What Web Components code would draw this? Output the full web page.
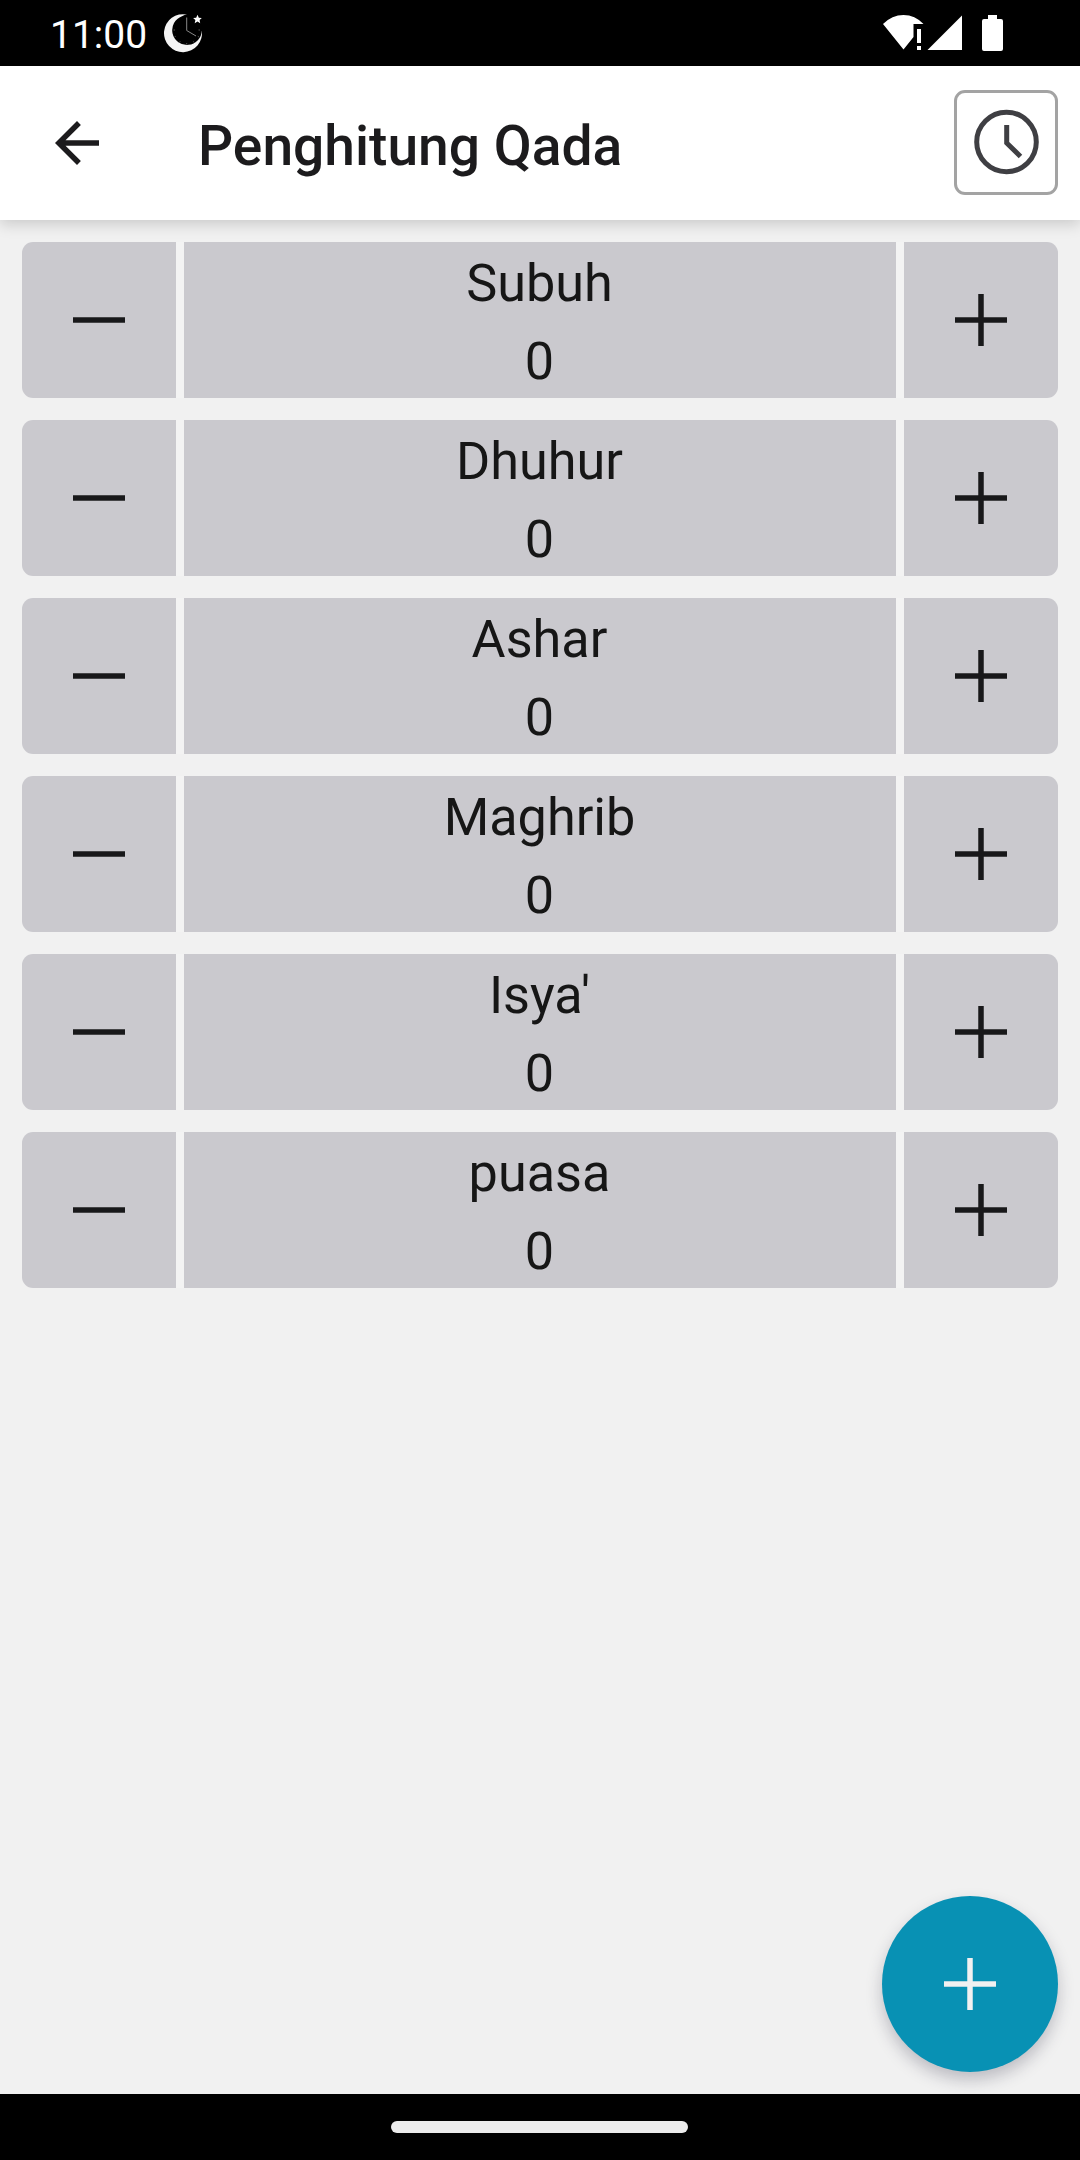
<!DOCTYPE html>
<html lang="id">
<head>
<meta charset="utf-8">
<title>Penghitung Qada</title>
<style>
html,body{margin:0;height:100%}
body{font-family:Roboto,"Noto Sans",sans-serif;background:#f1f1f1}
</style>
</head>
<body>
<qada-app></qada-app>
<script>
const define = (name, html) => customElements.define(name, class extends HTMLElement {
  constructor() {
    super();
    const t = document.createElement('template');
    t.innerHTML = html;
    this.attachShadow({ mode: 'open' }).append(t.content.cloneNode(true));
  }
});

define('status-bar', `
<style>
:host{display:flex;align-items:center;height:66px;background:#000;color:#fff;box-sizing:border-box;padding-left:50px}
span{font-size:39px;line-height:62px;padding-top:4px;height:66px;box-sizing:border-box;width:96px;white-space:nowrap}
svg{display:block}
.moon{margin-left:16px}
.right{margin-left:auto;margin-right:68px}
</style>
<span>11:00</span>
<svg class="moon" width="42" height="42" viewBox="162 12 42 42">
  <path fill="#f4f4f4" d="M187 14.600A19 19 0 1 0 201.800 30.500A14.800 14.800 0 1 1 182 16.200Q184.500 15 187 14.600Z"/>
  <path fill="none" stroke="#888" stroke-width="1" d="M186.700 17.500V30.500L196 36"/>
  <path fill="none" stroke="#555" stroke-width="1" d="M200 30h-1.500M173.500 30h1.500M186.700 44.500v-1.500M194 42.500l-.7-1.200M179.500 42.500l.7-1.200M174.500 37l1.200-.7M199 37l-1.200-.7"/>
  <path fill="#fff" d="M197.500 14.800l1.300 2.900 3 .3-2.200 2.100.6 3.200-2.700-1.700-2.800 1.700.7-3.200-2.300-2.100 3.100-.3z"/>
</svg>
<svg class="right" width="130" height="42" viewBox="882 12 130 42" fill="#fff">
  <path d="M883 24Q892 15 903.500 15T923.500 24H913.500V37L903.500 49.500Z"/>
  <path d="M917 29h4v14h-4zM917 46h4v4h-4z"/>
  <path d="M962 15.500V50H927.500Z"/>
  <path d="M988 15h9v4h4q2 0 2 2v28q0 2-2 2h-17q-2 0-2-2v-28q0-2 2-2h4z"/>
</svg>`);

define('app-bar', `
<style>
:host{display:flex;align-items:center;height:154px;background:#fff;color:#1c1b1d;box-sizing:border-box;padding:0 22px 0 44px;position:relative;z-index:1;box-shadow:0 4px 14px rgba(0,0,0,.17)}
svg{display:block}
h1{margin:6px 0 0 88px;font-size:55.150px;font-weight:500;line-height:70px;flex:1;white-space:nowrap}
button{all:unset;box-sizing:border-box;width:104px;height:105px;margin-bottom:2px;border:3px solid #a3a3a3;border-radius:11px;display:grid;place-items:center}
</style>
<svg width="66" height="66" viewBox="0 0 24 24"><path fill="#1c1b1d" d="M20 11H7.830l5.590-5.590L12 4l-8 8 8 8 1.410-1.410L7.830 13H20z"/></svg>
<h1><slot></slot></h1>
<button aria-label="Riwayat"><svg width="66" height="66" viewBox="0 0 66 66" fill="none" stroke="#3f3f43" stroke-width="5"><circle cx="33.500" cy="33" r="29.800"/><path d="M33.700 16V34L47.500 47.500"/></svg></button>`);

define('glyph-icon', `
<style>
:host{display:block;width:66px;height:66px}
svg{display:block}
:host([kind=minus]) .v{display:none}
</style>
<svg width="66" height="66" viewBox="0 0 66 66" stroke="currentColor" stroke-width="5.500"><path d="M7 33H59"/><path class="v" d="M33 7V59"/></svg>`);

define('qada-row', `
<style>
:host{display:grid;grid-template-columns:154px 1fr 154px;column-gap:8px;height:156px;background:#f3f3f3;border-radius:11px;overflow:hidden;color:#18181a}
.cell{background:#cac9ce;display:grid;place-items:center}
.info{background:#cac9ce;text-align:center;font-size:52.200px;line-height:78px;padding:3px 1px 0 0;box-sizing:border-box;height:156px;color:#161616}
.info div{height:78px}
</style>
<div class="cell"><glyph-icon kind="minus"></glyph-icon></div>
<div class="info"><div><slot name="label"></slot></div><div><slot name="count"></slot></div></div>
<div class="cell"><glyph-icon kind="plus"></glyph-icon></div>`);

define('add-fab', `
<style>
:host{display:grid;place-items:center;width:176px;height:176px;border-radius:50%;background:#0891b4;color:#f1f1f1;box-shadow:0 8px 16px rgba(40,40,60,.26)}
</style>
<glyph-icon kind="plus"></glyph-icon>`);

define('nav-bar', `
<style>
:host{display:grid;place-items:center;height:66px;background:#000;box-sizing:border-box;padding-right:1px}
div{width:297px;height:11.500px;border-radius:6px;background:#ececec}
</style>
<div></div>`);

define('qada-app', `
<style>
:host{display:flex;flex-direction:column;width:1080px;height:2160px;background:#f1f1f1}
main{flex:1;display:flex;flex-direction:column;gap:22px;padding:22px;box-sizing:border-box;min-height:0}
add-fab{margin:auto 0 0 auto}
</style>
<status-bar></status-bar>
<app-bar>Penghitung Qada</app-bar>
<main>
${['Subuh','Dhuhur','Ashar','Maghrib',"Isya'",'puasa'].map(n => `<qada-row><span slot="label">${n}</span><span slot="count">0</span></qada-row>`).join('')}
<add-fab></add-fab>
</main>
<nav-bar></nav-bar>`);
</script>
</body>
</html>
